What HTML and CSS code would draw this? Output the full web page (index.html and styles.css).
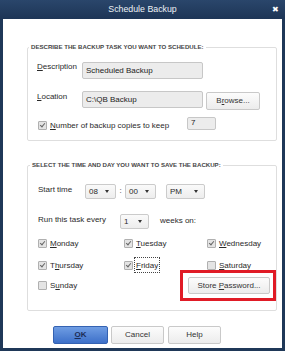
FILE: index.html
```html
<!DOCTYPE html>
<html lang="en">
<head>
  <meta charset="UTF-8">
  <title>Schedule Backup</title>
  <link rel="stylesheet" href="styles.css">
</head>
<body>
  <div class="window">
    <div class="titlebar">
      Schedule Backup
      <span class="close">&#x2716;</span>
    </div>
    <div class="content">

      <fieldset class="group group-describe">
        <legend>DESCRIBE THE BACKUP TASK YOU WANT TO SCHEDULE:</legend>
        <div class="row row-desc">
          <span class="label"><u>D</u>escription</span>
          <div class="input input-wide">Scheduled Backup</div>
        </div>
        <div class="row row-loc">
          <span class="label"><u>L</u>ocation</span>
          <div class="input input-wide">C:\QB Backup</div>
          <div class="button btn-browse">B<u>r</u>owse...</div>
        </div>
        <div class="row row-copies">
          <span class="check checked"></span>
          <span class="check-text"><u>N</u>umber of backup copies to keep</span>
          <div class="input input-num">7</div>
        </div>
      </fieldset>

      <fieldset class="group group-time">
        <legend>SELECT THE TIME AND DAY YOU WANT TO SAVE THE BACKUP:</legend>
        <div class="row row-start">
          <span class="label label-start">Start time</span>
          <div class="select sel-hour">08<span class="arrow"></span></div>
          <span class="colon">:</span>
          <div class="select sel-min">00<span class="arrow"></span></div>
          <div class="select sel-ampm">PM<span class="arrow"></span></div>
        </div>
        <div class="row row-run">
          <span class="label label-run">Run this task every</span>
          <div class="select sel-weeks">1<span class="arrow"></span></div>
          <span class="weeks">weeks on:</span>
        </div>
        <div class="days">
          <div class="day"><span class="check checked"></span><span><u>M</u>onday</span></div>
          <div class="day"><span class="check checked"></span><span><u>T</u>uesday</span></div>
          <div class="day"><span class="check checked"></span><span><u>W</u>ednesday</span></div>
          <div class="day"><span class="check checked"></span><span>T<u>h</u>ursday</span></div>
          <div class="day"><span class="check checked"></span><span class="focus"><u>F</u>riday</span></div>
          <div class="day"><span class="check"></span><span><u>S</u>aturday</span></div>
        </div>
        <div class="row row-last">
          <div class="day"><span class="check"></span><span>S<u>u</u>nday</span></div>
          <div class="store-wrap">
            <div class="button btn-store">Store <u>P</u>assword...</div>
            <div class="highlight"></div>
          </div>
        </div>
      </fieldset>

      <div class="actions">
        <div class="button btn-ok"><u>O</u>K</div>
        <div class="button btn-cancel">Cancel</div>
        <div class="button btn-help">Help</div>
      </div>
    </div>
  </div>
</body>
</html>
```
FILE: styles.css
```css
/* Schedule Backup dialog */
body {
  margin: 0;
  padding: 0;
  font-family: "Liberation Sans", Arial, sans-serif;
  font-size: 8px;
  color: #2a2a2a;
  background: #ffffff;
}
.window {
  width: 285px;
  height: 351px;
  box-sizing: border-box;
  border: 3px solid #1f3858;
  border-top: none;
  display: flex;
  flex-direction: column;
  background: #ffffff;
}
.titlebar {
  height: 19px;
  margin: 0 -3px;
  background: linear-gradient(#2a466b, #1d3556);
  color: #eef1f5;
  font-size: 8.8px;
  line-height: 19px;
  text-align: center;
  position: relative;
}
.close {
  position: absolute;
  right: 6px;
  top: 0;
  font-size: 8px;
  color: #ffffff;
}
.content {
  flex: 1;
  padding: 0 5px 0 24px;
}

/* group boxes */
.group {
  margin: 0;
  padding: 0 0 0 9px;
  border: 1px solid #dedede;
  border-radius: 2px;
}
.group legend {
  font-size: 6.1px;
  font-weight: bold;
  color: #444;
  line-height: 8px;
  padding: 0 2px 0 2px;
  margin-left: -8px;
}
.group-describe {
  margin-top: 24px;
  height: 98px;
  box-sizing: border-box;
}
.group-time {
  margin-top: 20px;
  padding-left: 10px;
  height: 150px;
  box-sizing: border-box;
}
.group-time legend { margin-left: -8px; }

.row {
  display: flex;
  align-items: flex-start;
}
.label {
  line-height: 10px;
  width: 45px;
  flex-shrink: 0;
}
.row-desc { margin-top: 11px; }
.row-loc { margin-top: 12px; }
.row-loc .label { padding-top: 1px; }
.row-copies {
  margin-top: 11px;
  align-items: center;
  padding-left: 1px;
}

.input {
  box-sizing: border-box;
  height: 17px;
  line-height: 15px;
  background: #ececec;
  border: 1px solid #c7c7c7;
  border-radius: 2px;
  padding-left: 3px;
  color: #222;
}
.input-wide { width: 121px; }
.input-num {
  width: 29px;
  height: 13px;
  line-height: 10px;
  margin-left: auto;
  margin-right: 60px;
  margin-top: -5px;
}

.button {
  box-sizing: border-box;
  height: 18px;
  line-height: 16px;
  text-align: center;
  border: 1px solid #c9c9c9;
  border-radius: 2px;
  background: linear-gradient(#fcfcfc, #ececec);
  color: #333;
}
.btn-browse {
  width: 54px;
  margin-left: 3px;
  margin-top: 1px;
}

/* checkboxes */
.check {
  width: 7px;
  height: 7px;
  border: 1px solid #b0b0b0;
  border-radius: 1px;
  background: #e4e4e4;
  flex-shrink: 0;
  position: relative;
}
.check.checked::after {
  content: '';
  position: absolute;
  left: 2px;
  top: 0;
  width: 2px;
  height: 4px;
  border: solid #666;
  border-width: 0 1.2px 1.2px 0;
  transform: rotate(40deg);
}
.check-text {
  margin-left: 3px;
}

/* selects */
.row-start {
  margin-top: 15px;
  align-items: center;
}
.label-start { width: 47px; margin-top: -4px; }
.select {
  box-sizing: border-box;
  height: 15px;
  line-height: 13px;
  border: 1px solid #cbcbcb;
  border-radius: 2px;
  background: linear-gradient(#fafafa, #ededed);
  padding-left: 3px;
  position: relative;
}
.arrow {
  position: absolute;
  right: 6px;
  top: 5px;
  width: 0;
  height: 0;
  border-left: 2.5px solid transparent;
  border-right: 2.5px solid transparent;
  border-top: 3px solid #333;
}
.sel-hour { width: 31px; }
.colon {
  width: 9px;
  text-align: center;
  margin-top: -3px;
}
.sel-min { width: 31px; }
.sel-ampm { width: 39px; margin-left: 10px; }

.row-run {
  margin-top: 15px;
  align-items: center;
}
.label-run { width: 82px; margin-top: -3px; }
.sel-weeks { width: 29px; }
.weeks { margin-left: 11px; margin-top: -3px; }

/* days */
.days {
  display: grid;
  grid-template-columns: 86px 83px 1fr;
  row-gap: 12px;
  margin-top: 9px;
}
.day {
  display: flex;
  align-items: center;
  gap: 3px;
  height: 10px;
}
.focus {
  outline: 1px dotted #444;
  outline-offset: 0;
  padding: 3px 1px 2px 1px;
  margin-left: -1px;
}
.row-last {
  margin-top: 7px;
  align-items: center;
}
.store-wrap {
  margin-left: auto;
  margin-right: 6px;
  position: relative;
}
.btn-store {
  width: 82px;
  height: 17px;
  line-height: 15px;
}
.highlight {
  position: absolute;
  left: -8px;
  right: -6px;
  top: -7px;
  bottom: -7px;
  border: 3px solid #e01b26;
  box-sizing: border-box;
}

/* bottom buttons */
.actions {
  display: flex;
  gap: 3px;
  margin-top: 15px;
  margin-left: 26px;
}
.actions .button { width: 53px; }
.btn-ok {
  width: 55px !important;
  background: linear-gradient(#6f9de3, #3d70c9);
  border-color: #3462b2;
  color: #1c2c55;
  font-weight: bold;
}
.btn-help { margin-left: 1px; }
```
